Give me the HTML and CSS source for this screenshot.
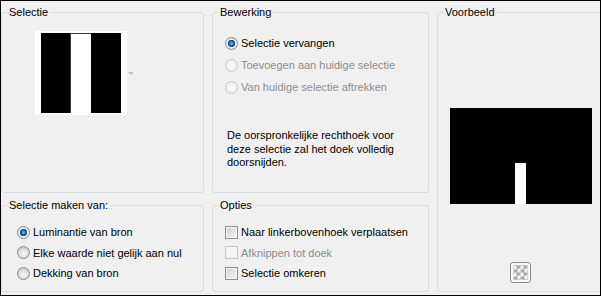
FILE: index.html
```html
<!DOCTYPE html>
<html lang="nl">
<head>
    <meta charset="UTF-8">
    <title>Selectie maken</title>
    <link rel="stylesheet" href="styles.css">
</head>
<body>
    <div class="window">
        <fieldset class="group sel">
            <legend>Selectie</legend>
            <div class="thumb-row">
                <div class="thumb"><div class="thumb-img"><div class="thumb-stripe"></div></div></div>
                <span class="drop-arrow"></span>
            </div>
        </fieldset>

        <fieldset class="group edit">
            <legend>Bewerking</legend>
            <div class="choices wide">
                <label class="choice"><span class="radio checked"></span>Selectie vervangen</label>
                <label class="choice disabled"><span class="radio"></span>Toevoegen aan huidige selectie</label>
                <label class="choice disabled"><span class="radio"></span>Van huidige selectie aftrekken</label>
            </div>
            <p class="note">De oorspronkelijke rechthoek voor<br>deze selectie zal het doek volledig<br>doorsnijden.</p>
        </fieldset>

        <fieldset class="group preview">
            <legend>Voorbeeld</legend>
            <div class="preview-img"><div class="preview-stripe"></div></div>
            <div class="checker-btn"><div class="checker"></div></div>
        </fieldset>

        <fieldset class="group source">
            <legend>Selectie maken van:</legend>
            <div class="choices">
                <label class="choice"><span class="radio checked"></span>Luminantie van bron</label>
                <label class="choice"><span class="radio"></span>Elke waarde niet gelijk aan nul</label>
                <label class="choice"><span class="radio"></span>Dekking van bron</label>
            </div>
        </fieldset>

        <fieldset class="group opts">
            <legend>Opties</legend>
            <div class="choices">
                <label class="choice"><span class="check"></span>Naar linkerbovenhoek verplaatsen</label>
                <label class="choice disabled"><span class="check"></span>Afknippen tot doek</label>
                <label class="choice"><span class="check"></span>Selectie omkeren</label>
            </div>
        </fieldset>
    </div>
</body>
</html>
```

FILE: styles.css
```css
body {margin: 0; font-family: "Liberation Sans", Arial, sans-serif; font-size: 11px; color: #000;}
.window {width: 601px; height: 296px; box-sizing: border-box; border: 1px solid #000; background: #f0f0f0; padding: 5px 0 0 0; display: grid; grid-template-columns: 203px 217px 1fr; grid-template-rows: 187px 93px; column-gap: 8px; row-gap: 6px; overflow: hidden;}

/* group boxes */
.group {margin: 0; padding: 0; min-width: 0; border: 1px solid #d5dfe5; border-radius: 3px;}
.group legend {margin-left: 5px; padding: 0 2px; line-height: 13px; height: 13px;}
.sel {grid-column: 1; grid-row: 1;}
.edit {grid-column: 2; grid-row: 1;}
.preview {grid-column: 3; grid-row: 1 / span 2; margin-right: -5px;}
.source {grid-column: 1; grid-row: 2;}
.opts {grid-column: 2; grid-row: 2;}

/* selectie thumbnail */
.thumb-row {display: flex; align-items: center; margin: 12px 0 0 33px;}
.thumb {background: #fff; padding: 2px 6px;}
.thumb-img {width: 80px; height: 80px; background: #000; display: flex;}
.thumb-stripe {margin-left: 29px; width: 20px; background: #fff; border-left: 1px solid #3c3c3c; border-top: 1px solid #3c3c3c;}
.drop-arrow {margin-left: 1px; width: 0; height: 0; border-left: 3px solid transparent; border-right: 3px solid transparent; border-top: 3px solid #c4c4c4;}

/* radio & checkbox rows */
.choices {margin-top: 10px; padding-left: 15px;}
.choices.wide {margin-top: 13px; padding-left: 12px;}
.opts .choices {padding-left: 12px;}
.choice {display: flex; align-items: center; height: 20.5px;}
.wide .choice {height: 22px;}
.choice.disabled {color: #8d8d8d;}
.radio {flex: none; width: 13px; height: 13px; box-sizing: border-box; margin-right: 3px; border-radius: 50%; border: 1px solid #8c8c8c; background: radial-gradient(circle at 50% 60%, #fafafa 0, #e6e6e6 3px, #cfcfcf 6px);}
.radio.checked {background: radial-gradient(circle at 50% 50%, #6cc0f0 0, #2a6db4 2px, #173f6e 3.4px, #f2f2f2 3.9px, #dcdcdc 6px);}
.disabled .radio {border-color: #cacaca; background: radial-gradient(circle, #fbfbfb 0, #ececec 6px);}
.check {flex: none; width: 13px; height: 13px; box-sizing: border-box; margin-right: 3px; border: 1px solid #8e8f8f; box-shadow: inset 0 0 0 1px #f4f4f4; background: linear-gradient(135deg, #cbcfd5, #f7f7f7);}
.disabled .check {border-color: #c7c7c7; box-shadow: none; background: #f4f4f4;}

.note {margin: 31px 0 0 14px; line-height: 13.5px;}

/* voorbeeld */
.preview-img {margin: 89px 0 0 12px; width: 142px; height: 96px; background: #000; display: flex; align-items: flex-end;}
.preview-stripe {margin-left: 65px; width: 11px; height: 41px; background: #fff;}
.checker-btn {margin: 58px 0 0 72px; width: 21px; height: 21px; box-sizing: border-box; border: 1px solid #8a8a8a; border-radius: 3px; background: #f8f8f8; padding: 2px;}
.checker {width: 15px; height: 15px; background-image: conic-gradient(#a9a9a9 25%, #f4f4f4 0 50%, #a9a9a9 0 75%, #f4f4f4 0); background-size: 7px 7px; background-position: 0.5px 0.5px;}
```
